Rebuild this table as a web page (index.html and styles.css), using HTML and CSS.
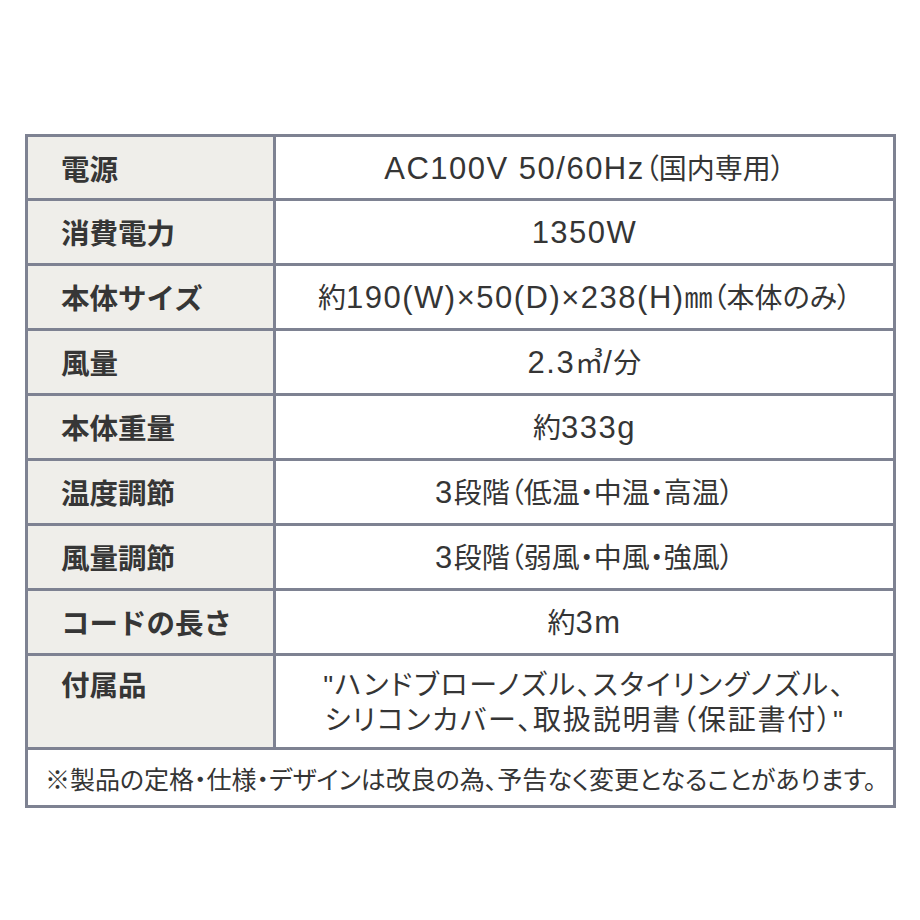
FILE: index.html
```html
<!DOCTYPE html>
<html lang="ja">
<head>
<meta charset="utf-8">
<link rel="stylesheet" href="styles.css">
</head>
<body>
<div class="page">
<table class="spec">
<tbody>
<tr><th class="label">電源</th><td class="value"><span class="en">AC100V 50/60Hz</span>（国内専用）</td></tr>
<tr><th class="label">消費電力</th><td class="value"><span class="en">1350W</span></td></tr>
<tr><th class="label">本体サイズ</th><td class="value">約<span class="en">190(W)×50(D)×238(H)</span>㎜（本体のみ）</td></tr>
<tr><th class="label">風量</th><td class="value"><span class="en">2.3</span>㎥<span class="en">/</span>分</td></tr>
<tr><th class="label">本体重量</th><td class="value">約<span class="en">333g</span></td></tr>
<tr><th class="label">温度調節</th><td class="value"><span class="en">3</span>段階（低温・中温・高温）</td></tr>
<tr><th class="label">風量調節</th><td class="value"><span class="en">3</span>段階（弱風・中風・強風）</td></tr>
<tr><th class="label">コードの長さ</th><td class="value">約<span class="en">3m</span></td></tr>
<tr class="tall"><th class="label label-top">付属品</th><td class="value value-multi"><span class="en">"</span>ハンドブローノズル、スタイリングノズル、<br>シリコンカバー、取扱説明書（保証書付）<span class="en">"</span></td></tr>
<tr class="note-row"><td class="note" colspan="2">※製品の定格・仕様・デザインは改良の為、予告なく変更となることがあります。</td></tr>
</tbody>
</table>
</div>
</body>
</html>
```
FILE: styles.css
```css
html, body {
  margin: 0;
  padding: 0;
  background: #ffffff;
}
.page {
  padding: 134px 0 0 25px;
}
.spec {
  border-collapse: separate;
  border-spacing: 3px;
  background: #7e8292;
  width: 871px;
  table-layout: fixed;
  font-family: "Noto Sans CJK JP", "Noto Sans", sans-serif;
  color: #333333;
}
.spec tr {
  height: 62px;
}
.spec tr:first-child {
  height: 61px;
}
.spec tr.tall {
  height: 91px;
}
.spec tr.note-row {
  height: 55px;
}
.label {
  width: 245px;
  background: #efeeea;
  text-align: left;
  font-weight: 700;
  font-size: 28.5px;
  line-height: 32px;
  padding: 0 0 0 33px;
  color: #363636;
  vertical-align: middle;
  box-sizing: border-box;
}
.label-top {
  vertical-align: top;
  padding-top: 12px;
}
.value {
  background: #ffffff;
  text-align: center;
  font-size: 28px;
  line-height: 33px;
  padding: 0;
  vertical-align: middle;
  font-feature-settings: "palt";
  color: #353535;
}
.value .en {
  font-family: "Liberation Sans", "Noto Sans CJK JP", sans-serif;
  font-size: 31px;
  letter-spacing: 1.5px;
}
.value-multi {
  letter-spacing: 1.8px;
}
.value-multi .en {
  font-size: 28px;
  line-height: 33px;
}
.note {
  background: #ffffff;
  text-align: left;
  font-size: 25px;
  line-height: 30px;
  padding: 0 0 0 17px;
  vertical-align: middle;
  font-feature-settings: "palt";
  color: #353535;
}
```
